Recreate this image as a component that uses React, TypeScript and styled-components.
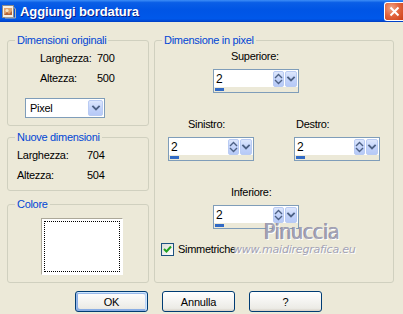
import React from 'react'
import styled, { createGlobalStyle } from 'styled-components'

const GlobalStyle = createGlobalStyle`
  html, body {
    margin: 0;
    padding: 0;
    background: #ece9d8;
  }
`

const Window = styled.div`
  position: relative;
  width: 403px;
  height: 314px;
  display: flex;
  flex-direction: column;
  background: #ece9d8;
  font-family: 'Liberation Sans', Arial, sans-serif;
  font-size: 11px;
  letter-spacing: -0.3px;
  color: #000;
  overflow: hidden;
`

const TitleBar = styled.div`
  height: 22px;
  flex: none;
  display: flex;
  align-items: center;
  padding: 0 0 0 1px;
  background: linear-gradient(
    to bottom,
    #3d8ef7 0%,
    #0a5ee6 12%,
    #0055e5 45%,
    #0058ea 85%,
    #0049d4 95%,
    #003cc0 100%
  );
`

const TitleText = styled.span`
  margin-left: 3px;
  color: #fff;
  font-family: 'Liberation Sans', Arial, sans-serif;
  font-weight: bold;
  font-size: 13px;
  letter-spacing: -0.1px;
  text-shadow: 1px 1px 0 #0a1e8a;
`

const CloseButton = styled.div`
  margin-left: auto;
  width: 19px;
  height: 19px;
  box-sizing: border-box;
  border: 1px solid #fff;
  border-right: none;
  border-radius: 3px 0 0 3px;
  background: radial-gradient(circle at 35% 30%, #f0a487 0%, #e3663f 45%, #cc3e16 100%);
  display: flex;
  align-items: center;
  justify-content: center;
`

const Body = styled.div`
  flex: 1;
  display: flex;
  flex-direction: column;
  padding: 12px 0 0 7px;
`

const Main = styled.div`
  display: flex;
  align-items: flex-start;
  gap: 5px;
`

const LeftColumn = styled.div`
  width: 142px;
  display: flex;
  flex-direction: column;
`

const Group = styled.fieldset<{ $height: number; $top?: number; $width?: number }>`
  position: relative;
  margin: ${(p) => p.$top ?? 0}px 0 0;
  padding: 0;
  width: ${(p) => p.$width ?? 142}px;
  height: ${(p) => p.$height}px;
  box-sizing: border-box;
  min-width: 0;
  border: 1px solid #d0d0bf;
  border-radius: 3px;
`

const Legend = styled.legend`
  margin-left: 7px;
  padding: 0 2px;
  color: #0046d5;
  line-height: 13px;
`

const InfoGrid = styled.div<{ $left: number; $col: number }>`
  display: grid;
  grid-template-columns: ${(p) => p.$col}px auto;
  row-gap: 7px;
  line-height: 13px;
  padding: 5px 0 0 ${(p) => p.$left}px;
`

const Select = styled.div`
  margin: 13px 0 0 17px;
  width: 80px;
  height: 20px;
  box-sizing: border-box;
  border: 1px solid #7f9db9;
  background: #fff;
  display: flex;
  align-items: center;
  padding: 1px;
`

const SelectText = styled.span`
  flex: 1;
  padding-left: 3px;
`

const ArrowButton = styled.div<{ $w: number }>`
  width: ${(p) => p.$w}px;
  align-self: stretch;
  box-sizing: border-box;
  border: 1px solid #b9cbf3;
  border-radius: 2px;
  background: linear-gradient(to bottom, #dde7fd 0%, #c4d4fa 50%, #b6c9f7 100%);
  display: flex;
  align-items: center;
  justify-content: center;
`

const Swatch = styled.div`
  margin: 7px 0 0 33px;
  width: 82px;
  height: 57px;
  box-sizing: border-box;
  border: 1px solid;
  border-color: #aca899 #fff #fff #aca899;
  background: #fff;
  padding: 2px;
`

const SwatchFocus = styled.div`
  width: 100%;
  height: 100%;
  box-sizing: border-box;
  border: 1px dotted #000;
`

const PixelArea = styled.div`
  display: flex;
  flex-direction: column;
  padding-top: 3px;
`

const FieldRow = styled.div<{ $top?: number; $left: number }>`
  display: flex;
  gap: 40px;
  margin-top: ${(p) => p.$top ?? 0}px;
  padding-left: ${(p) => p.$left}px;
`

const Field = styled.div`
  display: flex;
  flex-direction: column;
`

const FieldLabel = styled.span<{ $indent: number }>`
  padding-left: ${(p) => p.$indent}px;
  line-height: 13px;
  margin-bottom: 6px;
`

const SpinBox = styled.div`
  width: 86px;
  height: 24px;
  box-sizing: border-box;
  border: 1px solid #7f9db9;
  background: #fff;
  display: flex;
  flex-direction: column;
`

const SpinTop = styled.div`
  flex: 1;
  display: flex;
  padding: 1px 1px 0 0;
`

const SpinValue = styled.span`
  flex: 1;
  padding-left: 2px;
  font-size: 12px;
  line-height: 16px;
`

const SpinTrack = styled.div`
  height: 5px;
  background: #ece9d8;
  display: flex;
`

const SpinFill = styled.div`
  width: 9px;
  margin: 1px 0 0 1px;
  height: 3px;
  background: #316ac5;
`

const CheckRow = styled.label`
  display: flex;
  align-items: center;
  margin-top: 14px;
  padding-left: 6px;
  line-height: 13px;
`

const CheckBox = styled.span`
  width: 13px;
  height: 13px;
  box-sizing: border-box;
  border: 1px solid #1c5180;
  background: linear-gradient(135deg, #dcdcd7 0%, #fff 100%);
  display: flex;
  align-items: center;
  justify-content: center;
  margin-right: 4px;
`

const Watermark = styled.div`
  position: absolute;
  left: 78px;
  top: 174px;
  display: flex;
  flex-direction: column;
  align-items: flex-end;
  pointer-events: none;
  font-family: 'DejaVu Sans', sans-serif;
  color: #a3a3b6;
  text-shadow: 1px 1px 0 #fff, -1px 0 0 #8d8da0;
`

const MarkName = styled.span`
  margin-right: 16px;
  font-size: 21px;
  font-stretch: condensed;
  letter-spacing: -0.3px;
  line-height: 22px;
`

const MarkUrl = styled.span`
  font-style: italic;
  font-size: 11px;
  letter-spacing: -0.2px;
  line-height: 14px;
  text-shadow: 1px 1px 0 #fff;
`

const ButtonRow = styled.div`
  display: flex;
  gap: 14px;
  margin-top: 8px;
  padding-left: 68px;
`

const Button = styled.button<{ $default?: boolean }>`
  width: 73px;
  height: 21px;
  box-sizing: border-box;
  padding: 0;
  border: 1px solid #003c74;
  border-radius: 3px;
  background: linear-gradient(180deg, #fff, #ecebe6 86%, #d6d0c5);
  font-family: inherit;
  font-size: 11px;
  letter-spacing: -0.2px;
  color: #000;
  box-shadow: ${(p) =>
    p.$default
      ? 'inset -1px 1px #cee7ff, inset 1px 2px #98b8ea, inset -2px 2px #bcd4f6, inset 1px -1px #89ade4, inset 2px -2px #89ade4'
      : 'none'};
`

const Chevron = ({ d, w, h, sw = 1.6 }: { d: string; w: number; h: number; sw?: number }) => (
  <svg width={w} height={h} viewBox={`0 0 ${w} ${h}`}>
    <path d={d} fill="none" stroke="#4d6185" strokeWidth={sw} strokeLinecap="square" />
  </svg>
)

const SpinField = ({ label, indent }: { label: string; indent: number }) => (
  <Field>
    <FieldLabel $indent={indent}>{label}</FieldLabel>
    <SpinBox>
      <SpinTop>
        <SpinValue>2</SpinValue>
        <ArrowButton $w={11}>
          <Chevron w={9} h={14} d="M1.5 5.5 L4.5 2.5 L7.5 5.5 M1.5 8.5 L4.5 11.5 L7.5 8.5" sw={1.4} />
        </ArrowButton>
        <ArrowButton $w={12} style={{ marginLeft: 1 }}>
          <Chevron w={10} h={14} d="M2 5.5 L5 8.5 L8 5.5" sw={1.8} />
        </ArrowButton>
      </SpinTop>
      <SpinTrack>
        <SpinFill />
      </SpinTrack>
    </SpinBox>
  </Field>
)

const App: React.FC = () => (
  <Window>
    <GlobalStyle />
    <TitleBar>
      <svg width="16" height="16" viewBox="0 0 16 16">
        <rect x="1.5" y="2.5" width="11" height="12" fill="#f4efe6" stroke="#8a8a8a" />
        <rect x="3" y="5" width="8" height="7" fill="#e0a36c" />
        <circle cx="6" cy="7.5" r="1.6" fill="#f6e6c8" />
        <path d="M3 12 L6 9 L8 11 L11 8 L11 12 Z" fill="#b3643a" />
        <path d="M12.5 4 L14.5 6 L14.5 15 L4 15" fill="none" stroke="#b0b0b0" />
      </svg>
      <TitleText>Aggiungi bordatura</TitleText>
      <CloseButton>
        <svg width="11" height="11" viewBox="0 0 11 11">
          <path d="M1.5 1.5 L9.5 9.5 M9.5 1.5 L1.5 9.5" stroke="#fff" strokeWidth="2" />
        </svg>
      </CloseButton>
    </TitleBar>
    <Body>
      <Main>
        <LeftColumn>
          <Group $height={92}>
            <Legend>Dimensioni originali</Legend>
            <InfoGrid $left={32} $col={57}>
              <span>Larghezza:</span>
              <span>700</span>
              <span>Altezza:</span>
              <span>500</span>
            </InfoGrid>
            <Select>
              <SelectText>Pixel</SelectText>
              <ArrowButton $w={15}>
                <Chevron w={10} h={14} d="M2 5.5 L5 8.5 L8 5.5" sw={1.8} />
              </ArrowButton>
            </Select>
          </Group>
          <Group $height={60} $top={5}>
            <Legend>Nuove dimensioni</Legend>
            <InfoGrid $left={9} $col={70}>
              <span>Larghezza:</span>
              <span>704</span>
              <span>Altezza:</span>
              <span>504</span>
            </InfoGrid>
          </Group>
          <Group $height={85} $top={7}>
            <Legend>Colore</Legend>
            <Swatch>
              <SwatchFocus />
            </Swatch>
          </Group>
        </LeftColumn>
        <Group $height={249} $width={240}>
          <Legend>Dimensione in pixel</Legend>
          <PixelArea>
            <FieldRow $left={58}>
              <SpinField label="Superiore:" indent={18} />
            </FieldRow>
            <FieldRow $top={25} $left={13}>
              <SpinField label="Sinistro:" indent={20} />
              <SpinField label="Destro:" indent={2} />
            </FieldRow>
            <FieldRow $top={25} $left={58}>
              <SpinField label="Inferiore:" indent={18} />
            </FieldRow>
            <CheckRow>
              <CheckBox>
                <svg width="9" height="9" viewBox="0 0 9 9">
                  <path d="M1 4 L3.5 6.5 L8 1.5" fill="none" stroke="#21a121" strokeWidth="2" />
                </svg>
              </CheckBox>
              Simmetriche
            </CheckRow>
          </PixelArea>
          <Watermark>
            <MarkName>Pinuccia</MarkName>
            <MarkUrl>www.maidiregrafica.eu</MarkUrl>
          </Watermark>
        </Group>
      </Main>
      <ButtonRow>
        <Button $default>OK</Button>
        <Button>Annulla</Button>
        <Button>?</Button>
      </ButtonRow>
    </Body>
  </Window>
)

export default App
